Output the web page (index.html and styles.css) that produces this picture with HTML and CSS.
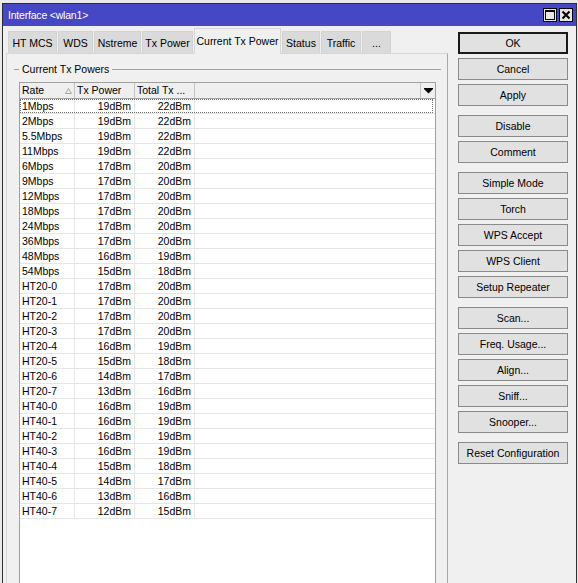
FILE: index.html
```html
<!DOCTYPE html>
<html>
<head>
<meta charset="utf-8">
<link rel="stylesheet" href="styles.css">
</head>
<body>
<div class="window">
  <div class="titlebar">
    <span class="title">Interface &lt;wlan1&gt;</span>
    <div class="tb-btns">
      <span class="tb-btn"><svg width="12" height="12" viewBox="0 0 12 12"><rect x="1.5" y="1.5" width="9" height="9" fill="none" stroke="#000" stroke-width="1"/><rect x="1" y="1" width="10" height="2" fill="#000"/></svg></span>
      <span class="tb-btn"><svg width="12" height="12" viewBox="0 0 12 12"><path d="M2.5 2.5 L9.5 9.5 M9.5 2.5 L2.5 9.5" stroke="#000" stroke-width="2"/></svg></span>
    </div>
  </div>
  <div class="main">
    <div class="left">
      <div class="tabs">
        <div class="tab t1">HT MCS</div>
        <div class="tab t2">WDS</div>
        <div class="tab t3">Nstreme</div>
        <div class="tab t4">Tx Power</div>
        <div class="tab t5 active">Current Tx Power</div>
        <div class="tab t6">Status</div>
        <div class="tab t7">Traffic</div>
        <div class="tab t8">...</div>
      </div>
      <div class="panel">
        <div class="legend">
          <span class="legend-dash"></span>
          <span class="legend-text">Current Tx Powers</span>
          <span class="legend-line"></span>
        </div>
        <div class="table">
          <div class="thead">
            <div class="hc c1"><span>Rate</span><svg class="sort" width="7" height="6" viewBox="0 0 7 6"><path d="M0.5 5.5 L3.5 0.5 L6.5 5.5 Z" fill="none" stroke="#a6a6a6" stroke-width="1"/></svg></div>
            <div class="hc c2">Tx Power</div>
            <div class="hc c3">Total Tx ...</div>
            <div class="hc cfill"></div>
            <div class="hc cdrop"><svg width="9" height="6" viewBox="0 0 9 6"><rect x="0" y="0" width="9" height="1" fill="#000"/><path d="M0 1 L9 1 L4.5 5.5 Z" fill="#000"/></svg></div>
          </div>
          <div class="row focused"><div class="c c1">1Mbps</div><div class="c c2">19dBm</div><div class="c c3">22dBm</div><div class="c crest"></div></div>
          <div class="row"><div class="c c1">2Mbps</div><div class="c c2">19dBm</div><div class="c c3">22dBm</div><div class="c crest"></div></div>
          <div class="row"><div class="c c1">5.5Mbps</div><div class="c c2">19dBm</div><div class="c c3">22dBm</div><div class="c crest"></div></div>
          <div class="row"><div class="c c1">11Mbps</div><div class="c c2">19dBm</div><div class="c c3">22dBm</div><div class="c crest"></div></div>
          <div class="row"><div class="c c1">6Mbps</div><div class="c c2">17dBm</div><div class="c c3">20dBm</div><div class="c crest"></div></div>
          <div class="row"><div class="c c1">9Mbps</div><div class="c c2">17dBm</div><div class="c c3">20dBm</div><div class="c crest"></div></div>
          <div class="row"><div class="c c1">12Mbps</div><div class="c c2">17dBm</div><div class="c c3">20dBm</div><div class="c crest"></div></div>
          <div class="row"><div class="c c1">18Mbps</div><div class="c c2">17dBm</div><div class="c c3">20dBm</div><div class="c crest"></div></div>
          <div class="row"><div class="c c1">24Mbps</div><div class="c c2">17dBm</div><div class="c c3">20dBm</div><div class="c crest"></div></div>
          <div class="row"><div class="c c1">36Mbps</div><div class="c c2">17dBm</div><div class="c c3">20dBm</div><div class="c crest"></div></div>
          <div class="row"><div class="c c1">48Mbps</div><div class="c c2">16dBm</div><div class="c c3">19dBm</div><div class="c crest"></div></div>
          <div class="row"><div class="c c1">54Mbps</div><div class="c c2">15dBm</div><div class="c c3">18dBm</div><div class="c crest"></div></div>
          <div class="row"><div class="c c1">HT20-0</div><div class="c c2">17dBm</div><div class="c c3">20dBm</div><div class="c crest"></div></div>
          <div class="row"><div class="c c1">HT20-1</div><div class="c c2">17dBm</div><div class="c c3">20dBm</div><div class="c crest"></div></div>
          <div class="row"><div class="c c1">HT20-2</div><div class="c c2">17dBm</div><div class="c c3">20dBm</div><div class="c crest"></div></div>
          <div class="row"><div class="c c1">HT20-3</div><div class="c c2">17dBm</div><div class="c c3">20dBm</div><div class="c crest"></div></div>
          <div class="row"><div class="c c1">HT20-4</div><div class="c c2">16dBm</div><div class="c c3">19dBm</div><div class="c crest"></div></div>
          <div class="row"><div class="c c1">HT20-5</div><div class="c c2">15dBm</div><div class="c c3">18dBm</div><div class="c crest"></div></div>
          <div class="row"><div class="c c1">HT20-6</div><div class="c c2">14dBm</div><div class="c c3">17dBm</div><div class="c crest"></div></div>
          <div class="row"><div class="c c1">HT20-7</div><div class="c c2">13dBm</div><div class="c c3">16dBm</div><div class="c crest"></div></div>
          <div class="row"><div class="c c1">HT40-0</div><div class="c c2">16dBm</div><div class="c c3">19dBm</div><div class="c crest"></div></div>
          <div class="row"><div class="c c1">HT40-1</div><div class="c c2">16dBm</div><div class="c c3">19dBm</div><div class="c crest"></div></div>
          <div class="row"><div class="c c1">HT40-2</div><div class="c c2">16dBm</div><div class="c c3">19dBm</div><div class="c crest"></div></div>
          <div class="row"><div class="c c1">HT40-3</div><div class="c c2">16dBm</div><div class="c c3">19dBm</div><div class="c crest"></div></div>
          <div class="row"><div class="c c1">HT40-4</div><div class="c c2">15dBm</div><div class="c c3">18dBm</div><div class="c crest"></div></div>
          <div class="row"><div class="c c1">HT40-5</div><div class="c c2">14dBm</div><div class="c c3">17dBm</div><div class="c crest"></div></div>
          <div class="row"><div class="c c1">HT40-6</div><div class="c c2">13dBm</div><div class="c c3">16dBm</div><div class="c crest"></div></div>
          <div class="row"><div class="c c1">HT40-7</div><div class="c c2">12dBm</div><div class="c c3">15dBm</div><div class="c crest"></div></div>
          <div class="empty"></div>
        </div>
      </div>
    </div>
    <div class="right">
      <div class="btn default">OK</div>
      <div class="btn">Cancel</div>
      <div class="btn">Apply</div>
      <div class="btn gap">Disable</div>
      <div class="btn">Comment</div>
      <div class="btn gap">Simple Mode</div>
      <div class="btn">Torch</div>
      <div class="btn">WPS Accept</div>
      <div class="btn">WPS Client</div>
      <div class="btn">Setup Repeater</div>
      <div class="btn gap">Scan...</div>
      <div class="btn">Freq. Usage...</div>
      <div class="btn">Align...</div>
      <div class="btn">Sniff...</div>
      <div class="btn">Snooper...</div>
      <div class="btn gap">Reset Configuration</div>
    </div>
  </div>
</div>
</body>
</html>
```
FILE: styles.css
```css
* { box-sizing: border-box; }
html, body { margin: 0; padding: 0; }
body {
  width: 578px;
  height: 583px;
  overflow: hidden;
  background: #e9e9e9;
  font-family: "Liberation Sans", Arial, sans-serif;
  font-size: 10.5px;
  color: #000;
}
.window {
  margin: 3px 0 0 2px;
  width: 575px;
  height: 600px;
  border: 1px solid #2e2e2e;
  background: #f0f0f0;
  display: flex;
  flex-direction: column;
}
.titlebar {
  height: 22px;
  flex: none;
  background: #4547c4;
  color: #fff;
  display: flex;
  align-items: center;
  justify-content: space-between;
  padding: 0 3px 0 5px;
}
.title { font-size: 10.5px; letter-spacing: -0.2px; }
.tb-btns { display: flex; gap: 2px; }
.tb-btn {
  width: 14px;
  height: 14px;
  background: #e6e6e6;
  border: 1px solid #000;
  display: flex;
  align-items: center;
  justify-content: center;
}
.tb-btn svg { display: block; }
.main {
  flex: 1;
  display: flex;
  padding: 2px 0 0 3px;
  min-height: 0;
}
.left {
  width: 442px;
  display: flex;
  flex-direction: column;
}
.tabs {
  height: 25px;
  display: flex;
  align-items: flex-end;
  gap: 1px;
  padding-left: 2px;
  position: relative;
  z-index: 1;
}
.tab {
  height: 22px;
  background: #dadada;
  border: 1px solid #d2d2d2;
  border-bottom: none;
  display: flex;
  align-items: center;
  justify-content: center;
  white-space: nowrap;
}
.tab.active {
  height: 26px;
  margin-bottom: -1px;
  background: #f0f0f0;
  border-color: #d6d6d6;
  padding-bottom: 1px;
}
.t1 { width: 49px; }
.t2 { width: 35px; }
.t3 { width: 47px; }
.t4 { width: 51px; }
.t5 { width: 87px; }
.t6 { width: 38px; }
.t7 { width: 40px; }
.t8 { width: 29px; }
.panel {
  flex: 1;
  border: 1px solid #d6d6d6;
  border-right-color: #a8a8a8;
  border-bottom: none;
  background: #f0f0f0;
  padding: 9px 6px 0 7px;
  display: flex;
  flex-direction: column;
}
.legend {
  height: 12px;
  display: flex;
  align-items: center;
}
.legend-dash { width: 5px; border-top: 1px solid #a0a0a0; }
.legend-text { padding: 0 3px; white-space: nowrap; }
.legend-line { flex: 1; border-top: 1px solid #a0a0a0; }
.table {
  margin: 7px 0 0 5px;
  width: 417px;
  flex: 1;
  border: 1px solid #a0a0a0;
  border-bottom: none;
  background: #fff;
  display: flex;
  flex-direction: column;
}
.thead {
  height: 16px;
  flex: none;
  display: flex;
  background: #efefef;
  border-bottom: 1px solid #a0a0a0;
}
.hc {
  border-right: 1px solid #c4c4c4;
  padding-left: 2px;
  line-height: 15px;
  white-space: nowrap;
}
.hc.c1 { display: flex; align-items: center; justify-content: space-between; padding-right: 2px; }
.sort { display: block; }
.c1 { width: 55px; }
.c2 { width: 60px; }
.c3 { width: 60px; }
.cfill { width: 226px; }
.cdrop {
  width: 14px;
  border-right: none;
  display: flex;
  align-items: center;
  justify-content: center;
  padding: 0 0 0 1px;
}
.cdrop svg { display: block; }
.row {
  height: 15px;
  flex: none;
  display: flex;
  border-bottom: 1px solid #e6e6e6;
  position: relative;
}
.row.focused::after {
  content: "";
  position: absolute;
  left: 0;
  top: 0;
  right: 2px;
  bottom: 0;
  border: 1px dotted #707070;
}
.c {
  line-height: 14px;
  border-right: 1px solid #e6e6e6;
  white-space: nowrap;
}
.c.c1 { padding-left: 2px; }
.c.c2, .c.c3 { text-align: right; padding-right: 3px; }
.c.crest { flex: 1; border-right: none; }
.empty { flex: 1; }
.right {
  width: 110px;
  margin-left: 10px;
  padding-top: 4px;
  display: flex;
  flex-direction: column;
  gap: 4px;
}
.btn {
  height: 22px;
  flex: none;
  background: #e1e1e1;
  border: 1px solid #8a8a8a;
  text-align: center;
  line-height: 20px;
  white-space: nowrap;
}
.btn.default {
  border: 2px solid #1a1a1a;
  line-height: 18px;
}
.btn.gap { margin-top: 5px; }
```
